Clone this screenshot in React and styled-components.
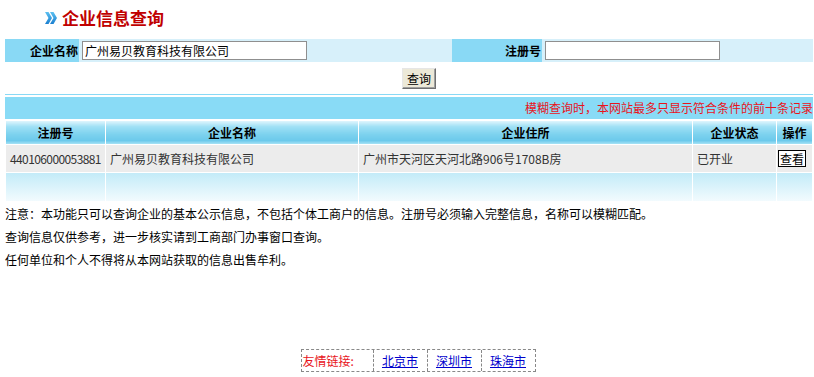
import React from 'react';
import styled, { createGlobalStyle } from 'styled-components';

const GlobalStyle = createGlobalStyle`
  body {
    margin: 0;
    background: #ffffff;
    font-family: "Noto Sans CJK SC", "Liberation Sans", sans-serif;
    font-size: 12px;
    color: #000;
  }
`;

function TitleArrow() {
  return (
    <svg width="12" height="12" viewBox="0 0 12 12">
      <defs>
        <linearGradient id="ag" x1="0" y1="0" x2="0" y2="1">
          <stop offset="0" stopColor="#5cc0f0" />
          <stop offset="1" stopColor="#1a7fd0" />
        </linearGradient>
      </defs>
      <polygon points="0,0 3.5,0 7,6 3.5,12 0,12 3.5,6" fill="url(#ag)" />
      <polygon points="5,0 8.5,0 12,6 8.5,12 5,12 8.5,6" fill="url(#ag)" />
    </svg>
  );
}

const rows = [
  {
    regNo: '440106000053881',
    name: '广州易贝教育科技有限公司',
    address: '广州市天河区天河北路906号1708B房',
    status: '已开业',
  },
];

function App() {
  return (
    <>
      <GlobalStyle />
      <Page>
        <TitleBar>
          <TitleArrow />
          <Title>企业信息查询</Title>
        </TitleBar>

        <SearchRow>
          <LabelCell>企业名称</LabelCell>
          <InputCell>
            <TextInput width="225px" defaultValue="广州易贝教育科技有限公司" />
          </InputCell>
          <LabelCell>注册号</LabelCell>
          <InputCell>
            <TextInput width="175px" defaultValue="" />
          </InputCell>
        </SearchRow>

        <ButtonRow>
          <SearchButton>查询</SearchButton>
        </ButtonRow>

        <NoticeBand>模糊查询时，本网站最多只显示符合条件的前十条记录</NoticeBand>

        <ResultTable>
          <colgroup>
            <col style={{ width: '100px' }} />
            <col style={{ width: '253px' }} />
            <col style={{ width: '334px' }} />
            <col style={{ width: '84px' }} />
            <col />
          </colgroup>
          <thead>
            <tr>
              <HeadCell>注册号</HeadCell>
              <HeadCell>企业名称</HeadCell>
              <HeadCell>企业住所</HeadCell>
              <HeadCell>企业状态</HeadCell>
              <HeadCell>操作</HeadCell>
            </tr>
          </thead>
          <tbody>
            {rows.map((r) => (
              <DataRow key={r.regNo}>
                <DataCell>
                  <Digits>{r.regNo}</Digits>
                </DataCell>
                <DataCell>{r.name}</DataCell>
                <DataCell>{r.address}</DataCell>
                <DataCell>{r.status}</DataCell>
                <DataCell>
                  <ViewButton>查看</ViewButton>
                </DataCell>
              </DataRow>
            ))}
            <EmptyRow>
              <td />
              <td />
              <td />
              <td />
              <td />
            </EmptyRow>
          </tbody>
        </ResultTable>

        <Notes>
          <p>注意：本功能只可以查询企业的基本公示信息，不包括个体工商户的信息。注册号必须输入完整信息，名称可以模糊匹配。</p>
          <p>查询信息仅供参考，进一步核实请到工商部门办事窗口查询。</p>
          <p>任何单位和个人不得将从本网站获取的信息出售牟利。</p>
        </Notes>

        <FooterRow>
          <LinkBox>
            <LinkCell first>友情链接:</LinkCell>
            <LinkCell>
              <a href="#">北京市</a>
            </LinkCell>
            <LinkCell>
              <a href="#">深圳市</a>
            </LinkCell>
            <LinkCell>
              <a href="#">珠海市</a>
            </LinkCell>
          </LinkBox>
        </FooterRow>
      </Page>
    </>
  );
}

export default App;

const Page = styled.div`
  width: 808px;
  padding-left: 5px;
  height: 377px;
  overflow: hidden;
`;

const TitleBar = styled.div`
  display: flex;
  align-items: center;
  gap: 5px;
  height: 39px;
  padding-left: 40px;
  padding-bottom: 3px;
  box-sizing: border-box;
`;

const Title = styled.h1`
  margin: 0;
  font-size: 17px;
  font-weight: bold;
  color: #c00000;
  line-height: 20px;
`;

const SearchRow = styled.div`
  display: grid;
  grid-template-columns: 74px 373px 90px 1fr;
  height: 23px;
  background: #d7f0fa;
`;

const LabelCell = styled.div`
  display: flex;
  align-items: center;
  justify-content: flex-end;
  padding-right: 1px;
  background: #89d9f5;
  font-weight: bold;
`;

const InputCell = styled.div`
  display: flex;
  align-items: center;
  padding-left: 3px;
`;

const TextInput = styled.input`
  box-sizing: border-box;
  width: ${(p) => p.width};
  height: 19px;
  margin: 0;
  padding: 0 2px;
  border: 1px solid #8f8f8f;
  background: #fff;
  font-family: "Noto Sans CJK SC", sans-serif;
  font-size: 12px;
  color: #000;
  outline: none;
`;

const ButtonRow = styled.div`
  display: flex;
  justify-content: center;
  padding: 6px 0 5px 20px;
`;

const SearchButton = styled.button`
  width: 34px;
  height: 21px;
  padding: 0;
  border: 1px solid #707070;
  border-top-color: #e6e6e6;
  border-left-color: #e6e6e6;
  box-shadow: inset -1px -1px 0 #a0a0a0;
  background: #ece9d8;
  font-family: "Noto Sans CJK SC", sans-serif;
  font-size: 12px;
  color: #000;
`;

const NoticeBand = styled.div`
  box-sizing: border-box;
  height: 25px;
  padding-top: 3px;
  color: #e8141c;
  line-height: 22px;
  text-align: right;
  background: linear-gradient(to bottom, #89d9f5 0, #89d9f5 1px, #fff 1px, #fff 3px, #89dbf6 3px);
`;

const ResultTable = styled.table`
  width: 808px;
  margin-top: 2px;
  border-collapse: collapse;
  table-layout: fixed;

  td,
  th {
    border-left: 1px solid #fff;
    border-right: 1px solid #fff;
  }
`;

const HeadCell = styled.th`
  height: 23px;
  padding: 0;
  font-size: 12px;
  font-weight: bold;
  text-align: center;
  background: linear-gradient(to bottom, #dff5fd 0%, #9fe0f5 25%, #7bd1ee 60%, #6cc9eb 85%, #a6e2f5 100%);
`;

const DataRow = styled.tr`
  height: 28px;
  background: #ececec;
  border-top: 1px solid #fff;
  border-bottom: 1px solid #fff;
`;

const DataCell = styled.td`
  padding: 0 4px;
  color: #333;
  white-space: nowrap;

  &:last-child {
    padding: 0 1px;
  }
`;

const Digits = styled.span`
  letter-spacing: -0.6px;
`;

const ViewButton = styled.button`
  height: 17px;
  padding: 0 1px;
  border: 1px solid #000;
  background: #fff;
  font-family: "Noto Sans CJK SC", sans-serif;
  font-size: 12px;
  line-height: 14px;
  color: #000;
`;

const EmptyRow = styled.tr`
  height: 28px;
  background: linear-gradient(to bottom, #c3ebf8, #f2fbfe);
`;

const Notes = styled.div`
  padding-top: 1px;

  p {
    margin: 0;
    line-height: 23px;
    color: #000;
  }
`;

const FooterRow = styled.div`
  display: flex;
  justify-content: center;
  padding: 78px 0 0 18px;
`;

const LinkBox = styled.div`
  display: flex;
  height: 21px;
  border: 1px dashed #888;
`;

const LinkCell = styled.div`
  display: flex;
  align-items: center;
  justify-content: ${(p) => (p.first ? 'flex-start' : 'center')};
  width: ${(p) => (p.first ? '70px' : '53px')};
  padding-left: ${(p) => (p.first ? '1px' : '0')};
  border-left: ${(p) => (p.first ? 'none' : '1px dashed #888')};
  color: #e8141c;

  a {
    color: #0000cc;
    text-decoration: underline;
  }
`;
